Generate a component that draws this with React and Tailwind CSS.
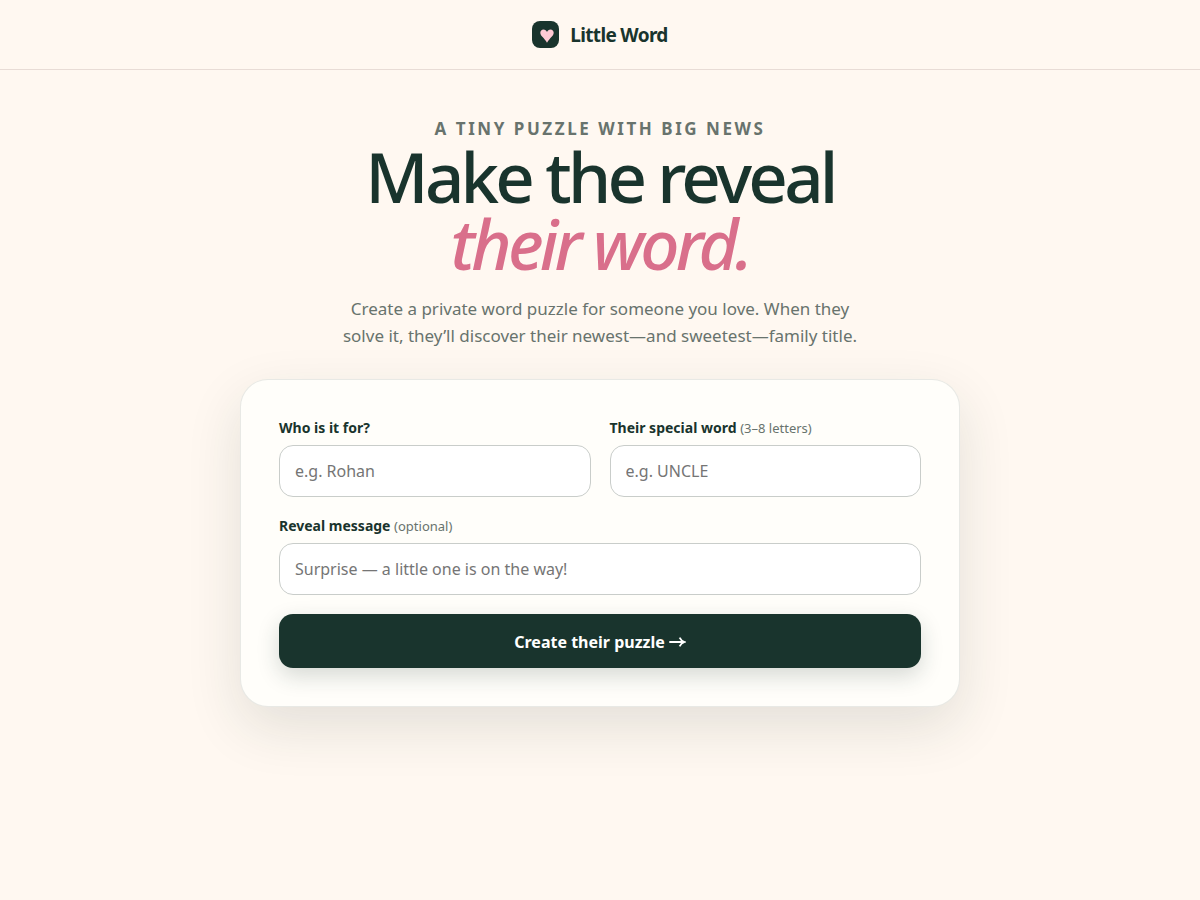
const label = "text-sm font-bold text-[#19342d]";
const hint = "text-[13px] font-normal text-[#68736d]";
const field =
  "h-[52px] w-full rounded-[14px] border border-[#c9cdca] bg-white px-[15px] text-base text-[#19342d] placeholder:text-[#757575] outline-none focus:border-[#d96f8b]";

function Field({ id, title, note, placeholder }) {
  return (
    <div className="flex min-w-0 flex-1 flex-col gap-[7px]">
      <label htmlFor={id} className={label}>
        {title} {note && <span className={hint}>{note}</span>}
      </label>
      <input id={id} type="text" placeholder={placeholder} className={field} />
    </div>
  );
}

function Heart() {
  return (
    <svg viewBox="0 0 14 14" className="ml-0.5 mt-0.5 size-[14px]" fill="#ffc9d4" aria-hidden="true">
      <path d="M7 13.8C5.6 11.4 4.2 9.9 2.6 8.1 1.2 6.5.3 5.4.3 3.8.3 1.9 1.7.5 3.5.5 5.1.5 6.4 1.5 7 3.1 7.6 1.5 8.9.5 10.5.5c1.8 0 3.2 1.4 3.2 3.3 0 1.6-.9 2.7-2.3 4.3C9.8 9.9 8.4 11.4 7 13.8Z" />
    </svg>
  );
}

function Arrow() {
  return (
    <svg viewBox="0 0 17 12" className="h-3 w-[17px]" fill="none" stroke="currentColor" strokeWidth="1.8" aria-hidden="true">
      <path d="M.3 6H15.2M10.6 1.6C11.6 3.8 13.2 5.2 15.6 6 13.2 6.8 11.6 8.2 10.6 10.4" />
    </svg>
  );
}

export default function App() {
  return (
    <div className="min-h-screen bg-[#fff8f1] font-['Noto_Sans',sans-serif] text-[#19342d]">
      <header className="flex h-[70px] items-center justify-center border-b border-[#e8dcd6]">
        <a href="#" className="flex items-center gap-[11px] text-[19px] leading-7 font-bold tracking-[-0.035em]">
          <span className="flex size-[27px] items-center justify-center rounded-lg bg-[#19342d]">
            <Heart />
          </span>
          Little Word
        </a>
      </header>
      <main className="mx-auto w-full max-w-[720px] pt-[45px]">
        <section className="text-center">
          <p className="text-[17px] leading-7 font-bold tracking-[0.15em] text-[#68736d]">
            A TINY PUZZLE WITH BIG NEWS
          </p>
          <h1 className="text-[69px] leading-[67px] font-medium tracking-[-0.055em]">
            Make the reveal
            <br />
            <em className="text-[#d96f8b]">their word.</em>
          </h1>
          <p className="mx-auto mt-[18px] max-w-[520px] text-[17px] leading-[27px] text-[#68736d]">
            Create a private word puzzle for someone you love. When they solve it, they’ll discover their
            newest—and sweetest—family title.
          </p>
        </section>
        <form
          onSubmit={(e) => e.preventDefault()}
          className="mt-[30px] flex flex-col gap-[19px] rounded-[28px] border border-[#19342d]/10 bg-[#fffefa] p-[38px] shadow-[0_20px_55px_rgba(25,52,45,0.12)]"
        >
          <div className="flex gap-[19px]">
            <Field id="name" title="Who is it for?" placeholder="e.g. Rohan" />
            <Field id="word" title="Their special word" note="(3–8 letters)" placeholder="e.g. UNCLE" />
          </div>
          <Field id="message" title="Reveal message" note="(optional)" placeholder="Surprise — a little one is on the way!" />
          <button
            type="submit"
            className="flex h-[54px] items-center justify-center gap-1 rounded-[14px] bg-[#19342d] pt-0.5 text-base font-bold text-white shadow-[0_8px_22px_rgba(25,52,45,0.18)]"
          >
            Create their puzzle
            <Arrow />
          </button>
        </form>
      </main>
    </div>
  );
}
